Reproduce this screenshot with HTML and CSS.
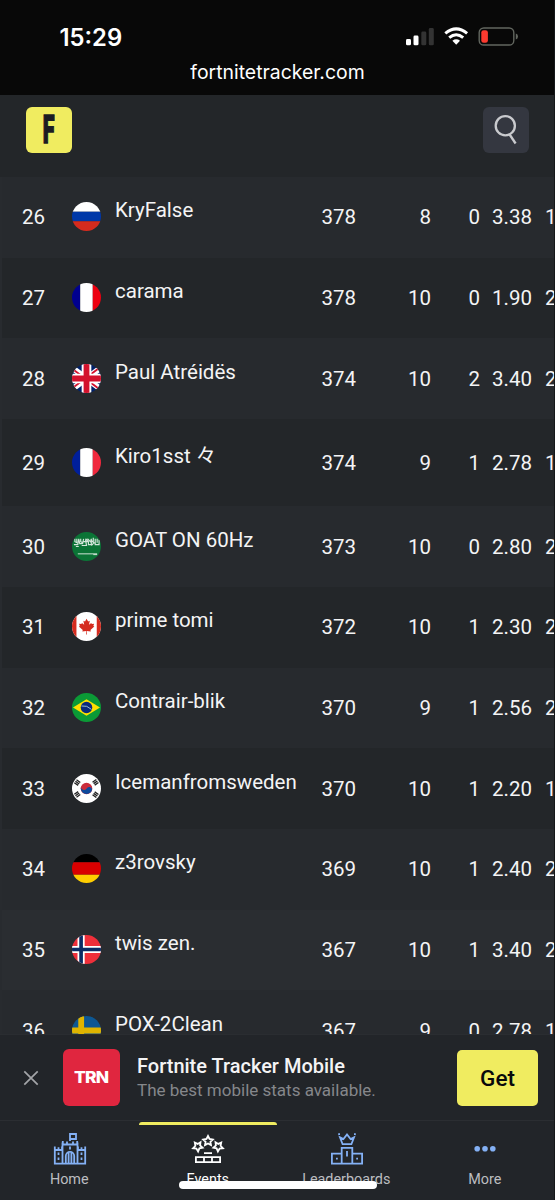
FILE: index.html
```html
<!DOCTYPE html>
<html lang="en">
<head>
	<meta charset="UTF-8">
	<title>Fortnite Tracker</title>
	<link rel="stylesheet" href="styles.css">
</head>
<body>
	<div id="main">
		<div class="status">
			<div class="status-row">
				<span class="time">15:29</span>
				<svg class="status-icons" width="114" height="20" viewBox="0 0 114 20">
					<rect x="1" y="12" width="5" height="6.3" rx="1.4" fill="#fff"/>
					<rect x="8.5" y="8.5" width="5" height="9.8" rx="1.4" fill="#fff"/>
					<rect x="16.3" y="4.6" width="5" height="13.7" rx="1.4" fill="#333"/>
					<rect x="23.8" y="1" width="5" height="17.3" rx="1.4" fill="#333"/>
					<g fill="none" stroke="#fff" stroke-width="3">
						<path d="M40.3 6.3Q51.2-2.6 62.1 6.3"/>
						<path d="M44.2 10.6Q51.2 4.8 58.2 10.6"/>
					</g>
					<path d="M47.4 13.7Q51.2 10.9 55 13.7L51.2 17.7Z" fill="#fff"/>
					<rect x="74.2" y="1" width="34.6" height="17" rx="4.6" fill="none" stroke="#62665f" stroke-width="1.4"/>
					<rect x="76.3" y="3.2" width="6.6" height="12.6" rx="2.4" fill="#fb3a2f"/>
					<path d="M110.8 6.5Q113 7.2 113 9.5T110.8 12.5Z" fill="#62665f"/>
				</svg>
			</div>
			<div class="url">fortnitetracker.com</div>
		</div>

		<div class="header">
			<div class="logo"><span>F</span></div>
			<div class="search">
				<svg width="46" height="46" viewBox="0 0 46 46" fill="none" stroke="#c9cace" stroke-width="2.3">
					<circle cx="22.3" cy="18.7" r="9.6"/>
					<path d="M26.6 27.5L32.6 36.5"/>
				</svg>
			</div>
		</div>

		<ul id="list">
			<li>
				<span class="rank">26</span>
				<svg class="flag" viewBox="0 0 30 30"><path fill="#fff" d="M0 0h30v10H0z"/><path fill="#0038a8" d="M0 10h30v10H0z"/><path fill="#d52b1e" d="M0 20h30v10H0z"/></svg>
				<span class="name">KryFalse</span>
				<span class="pts">378</span><span class="num">8</span><span class="win">0</span><span class="avg">3.38</span><span class="cut">1</span>
			</li>
			<li>
				<span class="rank">27</span>
				<svg class="flag" viewBox="0 0 30 30"><path fill="#00008f" d="M0 0h8.5v30H0z"/><path fill="#fff" d="M8.5 0h13v30h-13z"/><path fill="#ed0010" d="M21.5 0H30v30h-8.5z"/></svg>
				<span class="name">carama</span>
				<span class="pts">378</span><span class="num">10</span><span class="win">0</span><span class="avg">1.90</span><span class="cut">2</span>
			</li>
			<li>
				<span class="rank">28</span>
				<svg class="flag" viewBox="0 0 30 30"><path fill="#012169" d="M0 0h30v30H0z"/><path stroke="#fff" stroke-width="6" d="M-5 0L35 30M35 0L-5 30"/><path stroke="#d3122d" stroke-width="2" d="M-5 1L15 16M15 14L35 -1M15 16L35 31M-5 29L15 14"/><path stroke="#fff" stroke-width="10" d="M15 0v30M0 15h30"/><path stroke="#d3122d" stroke-width="6" d="M15 0v30M0 15h30"/></svg>
				<span class="name">Paul Atréidës</span>
				<span class="pts">374</span><span class="num">10</span><span class="win">2</span><span class="avg">3.40</span><span class="cut">2</span>
			</li>
			<li class="tall">
				<span class="rank">29</span>
				<svg class="flag" viewBox="0 0 30 30"><path fill="#001f9b" d="M0 0h8.5v30H0z"/><path fill="#fff" d="M8.5 0h13v30h-13z"/><path fill="#f0293e" d="M21.5 0H30v30h-8.5z"/></svg>
				<span class="name">Kiro1sst 々</span>
				<span class="pts">374</span><span class="num">9</span><span class="win">1</span><span class="avg">2.78</span><span class="cut">1</span>
			</li>
			<li>
				<span class="rank">30</span>
				<svg class="flag" viewBox="0 0 30 30"><path fill="#0b7436" d="M0 0h30v30H0z"/><path fill="none" stroke="#d4e5da" stroke-width="1.2" d="M3 7v3l2 1V7M2 13h4l1-6 1 5h3l1-5M9 7v3l2 1M10 14h5l-1-6M14 7l3 3v3h3V7M16 7l4 4M22 6v6l-2 2M24 7v6h4V8M26 7v4M4 15h3M12 10h5M19 8l5 4"/><path stroke="#d4e5da" stroke-width="1" d="M6 22.6h20M22 23.4h4"/></svg>
				<span class="name">GOAT ON 60Hz</span>
				<span class="pts">373</span><span class="num">10</span><span class="win">0</span><span class="avg">2.80</span><span class="cut">2</span>
			</li>
			<li>
				<span class="rank">31</span>
				<svg class="flag" viewBox="0 0 30 30"><path fill="#fff" d="M0 0h30v30H0z"/><path fill="#d52b1e" d="M0 0h4.6v30H0zM25.6 0H30v30h-4.4zM15 7l1.7 2.8 1.7-.8-.8 4.3 2.3-2 .6 1.2 2.4-.4-.8 2.4 1 .6-4 3.5.4 1.5-4.1-.5.1 3.6h-.8l.1-3.6-4.1.5.4-1.5-4-3.5 1-.6-.8-2.4 2.4.4.6-1.2 2.3 2-.8-4.3 1.7.8z"/></svg>
				<span class="name">prime tomi</span>
				<span class="pts">372</span><span class="num">10</span><span class="win">1</span><span class="avg">2.30</span><span class="cut">2</span>
			</li>
			<li>
				<span class="rank">32</span>
				<svg class="flag" viewBox="0 0 30 30"><path fill="#0b9a36" d="M0 0h30v30H0z"/><path fill="#fedf00" d="M15 6.5L29 15 15 23.5 1 15z"/><circle cx="15" cy="15" r="6" fill="#0b2a7b"/><path fill="none" stroke="#9fc3d6" d="M9.8 13.4Q15.5 12.4 20.2 17"/></svg>
				<span class="name">Contrair-blik</span>
				<span class="pts">370</span><span class="num">9</span><span class="win">1</span><span class="avg">2.56</span><span class="cut">2</span>
			</li>
			<li>
				<span class="rank">33</span>
				<svg class="flag" viewBox="0 0 30 30"><path fill="#fff" d="M0 0h30v30H0z"/><g stroke="#222" stroke-width="4.8" stroke-dasharray="1.4 .5"><path d="M4 11L7.2 6.5M22.8 6.5L26 11M4 19L7.2 23.5M22.8 23.5L26 19"/></g><circle cx="15" cy="15" r="6" fill="#cb2c3c"/><path fill="#0e4a9c" d="M9.2 13.3A3.2 3.2 0 0 0 15 15.2 3.1 3.1 0 0 1 20.9 16 6 6 0 1 1 9.2 13.3z"/></svg>
				<span class="name">Icemanfromsweden</span>
				<span class="pts">370</span><span class="num">10</span><span class="win">1</span><span class="avg">2.20</span><span class="cut">1</span>
			</li>
			<li>
				<span class="rank">34</span>
				<svg class="flag" viewBox="0 0 30 30"><path d="M0 0h30v8.5H0z"/><path fill="#d90000" d="M0 8.5h30v13H0z"/><path fill="#ffce00" d="M0 21.5h30V30H0z"/></svg>
				<span class="name">z3rovsky</span>
				<span class="pts">369</span><span class="num">10</span><span class="win">1</span><span class="avg">2.40</span><span class="cut">2</span>
			</li>
			<li class="light">
				<span class="rank">35</span>
				<svg class="flag" viewBox="0 0 30 30"><path fill="#ef2f3a" d="M0 0h30v30H0z"/><path stroke="#fff" stroke-width="7.4" d="M9.4 0v30M0 15h30"/><path stroke="#0b2c64" stroke-width="3.8" d="M9.4 0v30M0 15h30"/></svg>
				<span class="name">twis zen.</span>
				<span class="pts">367</span><span class="num">10</span><span class="win">1</span><span class="avg">3.40</span><span class="cut">2</span>
			</li>
			<li>
				<span class="rank">36</span>
				<svg class="flag" viewBox="0 0 30 30"><path fill="#0d5793" d="M0 0h30v30H0z"/><path stroke="#dfb400" stroke-width="6" d="M9.5 0v30M0 15h30"/></svg>
				<span class="name">POX-2Clean</span>
				<span class="pts">367</span><span class="num">9</span><span class="win">0</span><span class="avg">2.78</span><span class="cut">1</span>
			</li>
		</ul>

		<div class="banner">
			<svg class="close" width="16" height="16" viewBox="0 0 16 16" stroke="#a3a5a8" stroke-width="1.7"><path d="M1.3 1.3L14.7 14.7M14.7 1.3L1.3 14.7"/></svg>
			<div class="trn"><span>TRN</span></div>
			<div class="app">
				<div class="title">Fortnite Tracker Mobile</div>
				<div class="desc">The best mobile stats available.</div>
			</div>
			<div class="get">Get</div>
		</div>

		<div class="nav">
			<div class="item">
				<svg width="34" height="34" viewBox="0 0 34 34" fill="none" stroke="#84b1f5" stroke-width="1.8">
					<path d="M17 9V2h6v5h-6M9.5 31V10.5M24.5 31V10.5M9.8 9v3.5h14.4V9M14 9.5v3M20 9.5v3M9 18H1.8v13.7h30.4V18H25M1.8 18v-3.6M5.5 18v-2.8M9 18v-3.6M32.2 18v-3.6M28.5 18v-2.8M25 18v-3.6"/>
					<path d="M12.8 31v-7a4.2 4.2 0 0 1 8.4 0v7M15.6 31V21M18.4 31V21M17 14.5v3M5.5 20.5v2.6M5.5 25.5v2.6M28.5 20.5v2.6M28.5 25.5v2.6"/>
				</svg>
				<span>Home</span>
			</div>
			<div class="item active">
				<svg width="34" height="34" viewBox="0 0 34 34" fill="none" stroke="#fff" stroke-width="1.8">
					<path d="M17 4l1.5 3 3.3.5-2.4 2.3.6 3.3-3-1.6-3 1.6.6-3.3-2.4-2.3 3.3-.5z"/>
					<path d="M3.8 10.6l2.9 1.3 2.8-1.7-.4 3.3 2.5 2.2-3.2.7-1.3 3-1.7-2.9-3.3-.3 2.3-2.4z"/>
					<path d="M30.2 10.6l-2.9 1.3-2.8-1.7.4 3.3-2.5 2.2 3.2.7 1.3 3 1.7-2.9 3.3-.3-2.3-2.4z"/>
					<path d="M13 21.2h8M4.9 25.1h24.2v5H4.9zM13 25.1v5M21 25.1v5"/>
				</svg>
				<span>Events</span>
			</div>
			<div class="item">
				<svg width="34" height="34" viewBox="0 0 34 34" fill="none" stroke="#84b1f5" stroke-width="1.8">
					<path d="M10 5.3l3.4 1.8L17 2.5l3.6 4.6L24 5.3l-2.6 6.9h-8.8zM8.2 2.2h1.8M24 2.2h1.8"/>
					<path d="M11.7 31.6V15.8h10.6v15.8M11.7 21.6H1.9v10h30.2v-10h-9.8M17 19v5.6M6 26.6h1.8M26.2 26.6H28"/>
				</svg>
				<span>Leaderboards</span>
			</div>
			<div class="item">
				<svg width="34" height="34" viewBox="0 0 34 34" fill="#84b1f5">
					<circle cx="9.2" cy="16.8" r="2.8"/><circle cx="17" cy="16.8" r="2.8"/><circle cx="24.8" cy="16.8" r="2.8"/>
				</svg>
				<span>More</span>
			</div>
			<div class="home-bar"></div>
		</div>
	</div>
</body>
</html>
```
FILE: styles.css
```css
*{
	margin: 0;
	padding: 0;
	box-sizing: border-box;
}
ul,li{
	list-style: none;
}
body{
	background-color: #080808;
}
#main{
	width: 555px;
	height: 1200px;
	display: flex;
	flex-direction: column;
	overflow: hidden;
	border-right: 1px solid #151719;
	background-color: #232629;
	font-family: Roboto, "Noto Sans CJK JP", sans-serif;
	color: #f4f4f5;
}

/* status bar */
.status{
	height: 95px;
	margin-right: -1px;
	background-color: #080808;
	font-family: Inter, sans-serif;
	color: #fff;
}
.status-row{
	height: 60px;
	padding: 14px 36px 0 59.5px;
	display: flex;
	justify-content: space-between;
	align-items: center;
}
.time{
	font-size: 23.8px;
	font-weight: 600;
}
.url{
	line-height: 24px;
	font-size: 19.4px;
	text-align: center;
}

.header{
	height: 82px;
	padding: 11.5px 25px 0 25.5px;
	display: flex;
	justify-content: space-between;
	flex-shrink: 0;
}
.logo{
	width: 46px;
	height: 46px;
	border-radius: 6px;
	background-color: #f0ec60;
	color: #1b1c22;
	text-align: center;
	line-height: 46px;
	font-size: 39px;
	font-weight: 900;
	-webkit-text-stroke: 1.5px #1b1c22;
}
.logo span{
	display: inline-block;
	transform: scaleX(.55);
}
.search{
	width: 46px;
	height: 46px;
	border-radius: 6px;
	background-color: #343740;
}

/* leaderboard */
#list{
	flex: 1;
	min-height: 0;
	overflow: hidden;
	border-left: 2px solid #282b2f;
}
#list li{
	width: 580px;
	height: 80.7px;
	display: flex;
	align-items: center;
	background-color: #232629;
	font-size: 20.5px;
	line-height: 24px;
}
#list li:nth-child(odd){
	background-color: #272a2e;
}
#list .tall{
	height: 87.2px;
}
#list .light{
	background-color: #2a2d31;
}
.rank{
	width: 50px;
	margin-left: 20px;
}
.flag{
	width: 29px;
	height: 29px;
	margin-bottom: 1px;
	border-radius: 50%;
}
.name{
	width: 187px;
	margin-left: 14px;
	padding-bottom: 14px;
	white-space: nowrap;
}
.pts,.num,.win,.avg{
	text-align: right;
}
.pts{
	width: 54px;
}
.num{
	width: 75px;
}
.win{
	width: 49px;
}
.avg{
	width: 52px;
}
.cut{
	margin-left: 13px;
}

/* app banner */
.banner{
	height: 86px;
	padding: 0 16px 0 23px;
	display: flex;
	align-items: center;
	flex-shrink: 0;
	border-top: 1px solid #2a2d31;
	background-color: #222529;
}
.trn{
	width: 57px;
	height: 57px;
	margin-left: 24px;
	border-radius: 6px;
	background-color: #e0263f;
	color: #fff;
	text-align: center;
	line-height: 57px;
	font-family: Inter, sans-serif;
	font-size: 16.5px;
	font-weight: 800;
	letter-spacing: -.8px;
}
.trn span{
	display: inline-block;
	transform: scaleX(1.06);
}
.app{
	flex: 1;
	margin-left: 17px;
}
.title{
	font-size: 20px;
	font-weight: 500;
	line-height: 24px;
}
.desc{
	color: #85878b;
	font-size: 17px;
	line-height: 24px;
}
.get{
	width: 81px;
	height: 56px;
	border-radius: 5px;
	background-color: #f0ec60;
	color: #08090b;
	text-align: center;
	line-height: 56px;
	font-size: 22.5px;
	font-weight: 500;
}

/* bottom nav */
.nav{
	height: 80px;
	display: flex;
	flex-shrink: 0;
	position: relative;
	border-top: 1px solid #2b2e32;
	background-color: #222529;
}
.item{
	flex: 1;
	padding-top: 11px;
	display: flex;
	flex-direction: column;
	align-items: center;
	color: #bcbdc0;
	font-size: 14.4px;
	line-height: 18px;
}
.item svg{
	margin-left: 1px;
	margin-bottom: 5px;
}
.item.active{
	color: #fff;
	position: relative;
}
.item.active:before{
	content: "";
	position: absolute;
	top: 1px;
	left: 0;
	width: 100%;
	height: 3px;
	border-radius: 3px 3px 0 0;
	background-color: #f0ec60;
}
.home-bar{
	position: absolute;
	left: 179px;
	top: 60px;
	width: 198px;
	height: 8px;
	border-radius: 4px;
	background-color: #fff;
}
```
